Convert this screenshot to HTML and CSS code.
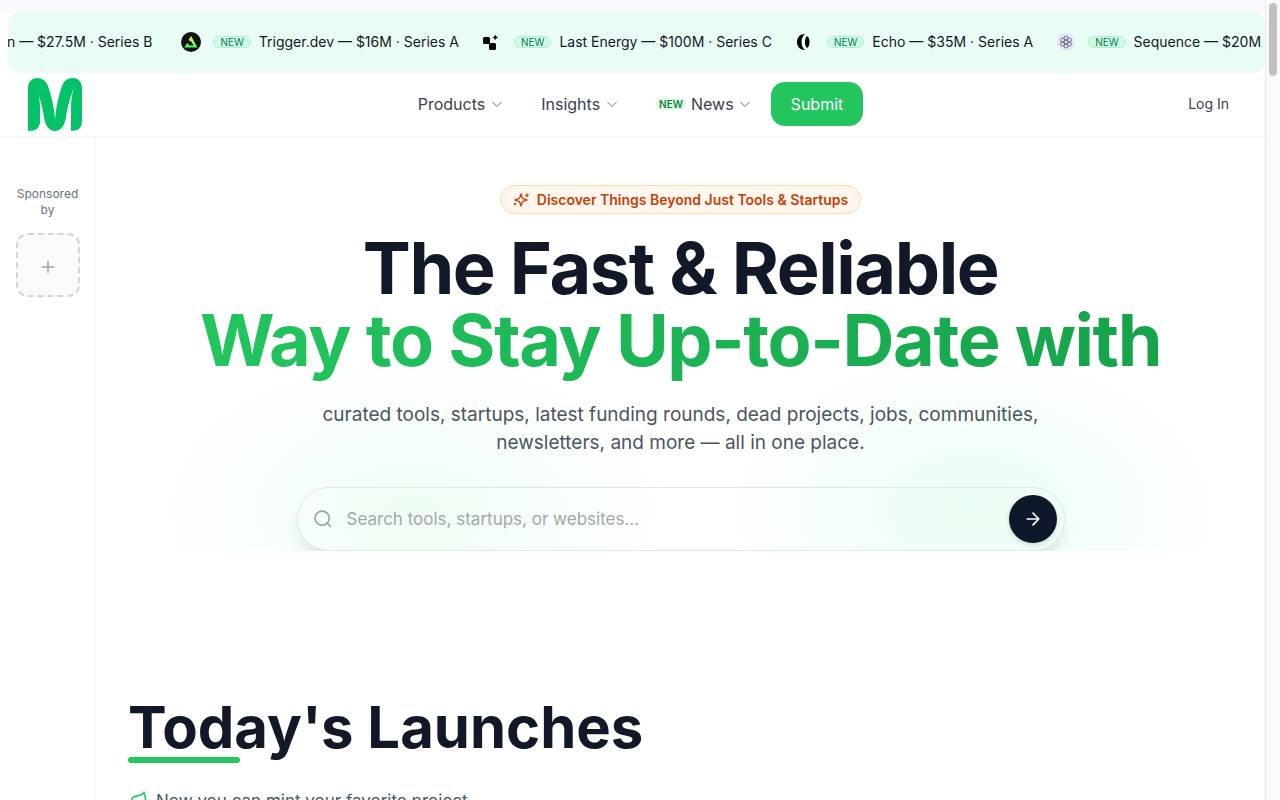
FILE: index.html
```
<!DOCTYPE html>
<html lang="en">
<head>
  <meta charset="UTF-8">
  <meta name="viewport" content="width=device-width, initial-scale=1.0">
  <title>Today's Launches</title>
  <link rel="stylesheet" href="styles.css">
</head>
<body>
<div class="page">

  <!-- Funding ticker -->
  <div class="ticker">
    <div class="ticker-track">
      <a href="#" class="ticker-item">Zen — $27.5M · Series B</a>
      <a href="#" class="ticker-item">
        <svg class="logo" viewBox="0 0 20 20">
          <defs><linearGradient id="trigger" x1="0" y1="0" x2="0" y2="1"><stop offset="0" stop-color="#e7ff52"/><stop offset="1" stop-color="#41ff54"/></linearGradient></defs>
          <circle cx="10" cy="10" r="10" fill="#121317"/>
          <path d="M7.6 8 10 4l6.5 11.500h-13L6 11.200l2.100 1.200-.7 1.200h5.200L10 9.200 9.700 9.600z" fill="url(#trigger)"/>
        </svg>
        <span class="tag">NEW</span>
        <span>Trigger.dev — $16M · Series A</span>
      </a>
      <a href="#" class="ticker-item">
        <svg class="logo" viewBox="0 0 20 20">
          <rect x="1" y="5" width="7" height="7" rx="1.500"/>
          <rect x="7" y="11" width="7" height="7" rx="1.500"/>
          <path d="M13.300 3q.4 2 2.400 2.400-2 .4-2.400 2.400-.4-2-2.400-2.400 2-.4 2.400-2.400z" stroke="#000" stroke-width=".4"/>
        </svg>
        <span class="tag">NEW</span>
        <span>Last Energy — $100M · Series C</span>
      </a>
      <a href="#" class="ticker-item">
        <svg class="logo" viewBox="0 0 20 20">
          <path d="M10 2C5 2 2 5.500 2 10s3 8 8 8C7.500 16 6.500 13 6.500 10S7.500 4 10 2z"/>
          <path d="M12 4c2 1 2.500 3.500 2.500 6S14 15 12 16c-1.500-1.500-2-3.500-2-6s.5-4.500 2-6z"/>
        </svg>
        <span class="tag">NEW</span>
        <span>Echo — $35M · Series A</span>
      </a>
      <a href="#" class="ticker-item">
        <svg class="logo" viewBox="0 0 20 20">
          <circle cx="10" cy="10" r="9" fill="#e6e6fa"/>
          <g fill="none" stroke="#5b5870" stroke-width=".8">
            <circle cx="10" cy="10" r="2"/><circle cx="10" cy="6" r="2"/><circle cx="10" cy="14" r="2"/>
            <circle cx="6.500" cy="8" r="2"/><circle cx="13.500" cy="8" r="2"/>
            <circle cx="6.500" cy="12" r="2"/><circle cx="13.500" cy="12" r="2"/>
          </g>
        </svg>
        <span class="tag">NEW</span>
        <span>Sequence — $20M</span>
      </a>
    </div>
  </div>

  <!-- Header -->
  <header class="header">
    <a href="#" class="brand" aria-label="Home">
      <svg width="54" height="53" viewBox="0 0 54 53" fill="#05c168">
        <path d="M0 53V10C0 4 4 0 9 0c7 0 10 4 12 11 3 10 5 18 6 31 1-13 3-21 6-31C35 4 38 0 45 0c5 0 9 4 9 10v33c0 7-4 10-11 10V30c0-8 1-14 3-20-4 9-7 22-8 29-1 8-5 14-11 14s-10-6-11-14c-1-7-4-20-8-29 3 6 4 12 4 20v13c0 7-4 10-12 10z"/>
      </svg>
    </a>
    <nav class="nav">
      <button class="nav-link">Products <svg class="chevron" viewBox="0 0 12 12"><path d="M1.500 4 6 8.500 10.500 4"/></svg></button>
      <button class="nav-link">Insights <svg class="chevron" viewBox="0 0 12 12"><path d="M1.500 4 6 8.500 10.500 4"/></svg></button>
      <button class="nav-link nav-news"><span class="news-tag">NEW</span><span>News</span> <svg class="chevron" viewBox="0 0 12 12"><path d="M1.500 4 6 8.500 10.500 4"/></svg></button>
      <button class="submit">Submit</button>
    </nav>
    <a href="#" class="login">Log In</a>
  </header>

  <div class="body">
    <!-- Sponsors -->
    <aside class="sidebar">
      <p>Sponsored by</p>
      <button class="sponsor-add" aria-label="Add sponsor">
        <svg width="16" height="16" viewBox="0 0 16 16" stroke="#9ca3af" stroke-width="1.500"><path d="M8 2v12M2 8h12"/></svg>
      </button>
    </aside>

    <main class="main">
      <section class="hero">
        <div class="pill">
          <svg width="16" height="16" viewBox="0 0 24 24" fill="none" stroke="currentColor" stroke-width="2" stroke-linecap="round" stroke-linejoin="round">
            <path d="M12 3 10.100 8.800a2 2 0 0 1-1.300 1.300L3 12l5.800 1.900a2 2 0 0 1 1.300 1.300L12 21l1.900-5.800a2 2 0 0 1 1.300-1.300L21 12l-5.800-1.900a2 2 0 0 1-1.300-1.300z"/>
            <path d="M21 3v4M23 5h-4M3 17v2M4 18H2"/>
          </svg>
          Discover Things Beyond Just Tools &amp; Startups
        </div>
        <h1>The Fast &amp; Reliable <span>Way to Stay Up-to-Date with</span></h1>
        <p class="lead">curated tools, startups, latest funding rounds, dead projects, jobs, communities, newsletters, and more — all in one place.</p>
        <form class="search">
          <svg width="20" height="20" viewBox="0 0 24 24" fill="none" stroke="#9aa3ab" stroke-width="2" stroke-linecap="round"><circle cx="11" cy="11" r="8.500"/><path d="m21 21-4-4"/></svg>
          <input type="text" placeholder="Search tools, startups, or websites..." aria-label="Search">
          <button type="button" aria-label="Search">
            <svg width="20" height="20" viewBox="0 0 24 24" fill="none" stroke="#fff" stroke-width="2" stroke-linecap="round" stroke-linejoin="round"><path d="M5 12h14M12 5l7 7-7 7"/></svg>
          </button>
        </form>
      </section>

      <section class="launches">
        <h2>Today's Launches</h2>
        <p class="mint">
          <svg width="20" height="20" viewBox="0 0 24 24" fill="none" stroke="#22c55e" stroke-width="2" stroke-linecap="round" stroke-linejoin="round"><path d="M11 20A7 7 0 0 1 9.800 6.100C15.500 5 17 4.480 19 2c1 2 2 4.180 2 8 0 5.500-4.780 10-10 10Z"/><path d="M2 21c0-3 1.850-5.360 5.080-6"/></svg>
          Now you can mint your favorite project
        </p>
      </section>
    </main>
  </div>
</div>

<div class="scrollbar"><div class="thumb"></div></div>
</body>
</html>
```

FILE: styles.css
```
* {
  box-sizing: border-box;
}

body {
  margin: 0;
  height: 100vh;
  display: flex;
  overflow: hidden;
  background: #fff;
  color: #111827;
  font-family: Inter, "Liberation Sans", sans-serif;
}

h1, h2, p {
  margin: 0;
}

a {
  color: inherit;
  text-decoration: none;
}

button, input {
  font: inherit;
  border: none;
  background: none;
  padding: 0;
}

button {
  cursor: pointer;
}

.page {
  flex: 1;
  min-width: 0;
  overflow: hidden;
}

/* ticker */
.ticker {
  padding: 12px 0 0 8px;
  background: linear-gradient(#f9f9fd 12px, #fff 12px);
}

.ticker-track {
  display: flex;
  align-items: center;
  gap: 23px;
  height: 61px;
  padding-bottom: 2px;
  overflow: hidden;
  border-radius: 12px;
  background: #eafdf4;
}

.ticker-item {
  display: flex;
  align-items: center;
  flex-shrink: 0;
  gap: 8px;
  font-size: 14px;
  white-space: nowrap;
}

.ticker-item:first-child {
  margin-left: -18px;
  margin-right: 6px;
}

.logo {
  width: 20px;
  height: 20px;
  margin-right: 4px;
}

.tag {
  padding: 0 6px;
  border: 1px solid #a7f3d0;
  border-radius: 6px;
  background: #d1fae5;
  color: #047857;
  font-size: 10px;
  line-height: 10px;
}

/* header */
.header {
  display: grid;
  grid-template-columns: 1fr auto 1fr;
  align-items: center;
  height: 65px;
  padding: 0 12px 0 28px;
  border-bottom: 2px solid #f6f7f8;
}

.brand svg {
  display: block;
}

.nav {
  display: flex;
  align-items: center;
  padding-bottom: 2px;
}

.nav-link {
  display: flex;
  align-items: center;
  gap: 6px;
  margin-right: 38px;
  color: #374151;
  font-size: 16px;
}

.nav-news {
  gap: 5px;
  margin-right: 20px;
}

.chevron {
  width: 12px;
  height: 12px;
  fill: none;
  stroke: #6b7280;
}

.news-tag {
  padding: 0 3px;
  border-radius: 6px;
  background: #dcfce7;
  color: #15803d;
  font-size: 10px;
  font-weight: 600;
  line-height: 12px;
}

.submit {
  height: 44px;
  padding: 0 20px;
  border-radius: 14px;
  background: #22c55e;
  color: #fff;
}

.login {
  justify-self: end;
  padding: 0 24px 2px 0;
  color: #374151;
  font-size: 14px;
}

/* sidebar */
.body {
  display: flex;
}

.sidebar {
  display: flex;
  flex-direction: column;
  align-items: center;
  gap: 15px;
  width: 96px;
  min-height: 100vh;
  padding: 48px 16px;
  border-right: 1px solid #f3f4f6;
  color: #6b7280;
  font-size: 12px;
  line-height: 16px;
  text-align: center;
}

.sponsor-add {
  display: flex;
  align-items: center;
  justify-content: center;
  width: 64px;
  height: 64px;
  padding-top: 4px;
  border: 2px dashed #d1d5db;
  border-radius: 12px;
  background: #f9fafb;
}

.main {
  flex: 1;
  min-width: 0;
}

/* hero */
.hero {
  display: flex;
  flex-direction: column;
  align-items: center;
  height: 413px;
  padding-top: 47px;
  overflow: hidden;
  background:
    radial-gradient(ellipse 260px 160px at 27% 90%, #effdf4 0%, #f6fef9 45%, rgba(255, 255, 255, 0) 100%),
    radial-gradient(ellipse 250px 160px at 75% 90%, #e9fcf2 0%, #f3fef8 45%, rgba(255, 255, 255, 0) 100%);
}

.pill {
  display: flex;
  align-items: center;
  gap: 8px;
  height: 30px;
  padding: 0 12px;
  border: 1px solid #fed7aa;
  border-radius: 15px;
  background: #fff7ed;
  color: #c2410c;
  font-size: 14px;
  font-weight: 600;
}

h1 {
  margin-top: 18px;
  font-size: 72px;
  font-weight: 700;
  line-height: 72px;
  letter-spacing: -0.02em;
  text-align: center;
}

h1 span {
  display: block;
  padding-bottom: 8px;
  background: linear-gradient(to right, #22c55e, #16a34a);
  -webkit-background-clip: text;
  background-clip: text;
  color: transparent;
}

.lead {
  max-width: 768px;
  margin-top: 17px;
  color: #4b5563;
  font-size: 19px;
  line-height: 28px;
  text-align: center;
}

.search {
  display: flex;
  align-items: center;
  flex-shrink: 0;
  gap: 14px;
  width: 768px;
  max-width: 100%;
  height: 64px;
  margin-top: 30px;
  padding: 0 7px 0 15px;
  border: 1px solid #dfe7e4;
  border-radius: 32px;
  box-shadow: 0 10px 15px -3px rgba(0, 0, 0, 0.1);
}

.search input {
  flex: 1;
  min-width: 0;
  outline: none;
  font-size: 17px;
}

.search input::placeholder {
  color: #9fa8ab;
}

.search button {
  display: flex;
  align-items: center;
  justify-content: center;
  width: 48px;
  height: 48px;
  border-radius: 50%;
  background: #0f172a;
  box-shadow: 0 2px 5px rgba(0, 0, 0, 0.15);
}

/* launches */
.launches {
  padding: 146px 32px 0;
}

h2 {
  font-size: 58px;
  font-weight: 700;
  line-height: 60px;
}

h2::after {
  content: "";
  display: block;
  width: 112px;
  height: 6px;
  border-radius: 3px;
  background: #22c55e;
}

.mint {
  display: flex;
  align-items: center;
  gap: 8px;
  margin-top: 24px;
  color: #4b5563;
  font-size: 17px;
  line-height: 28px;
}

/* scrollbar */
.scrollbar {
  width: 15px;
  padding: 3px 2px 0 3px;
  border-left: 1px solid #e8e8e8;
  background: #fafafa;
}

.thumb {
  width: 8px;
  height: 73px;
  border-radius: 4px;
  background: #c1c1c1;
}
```
